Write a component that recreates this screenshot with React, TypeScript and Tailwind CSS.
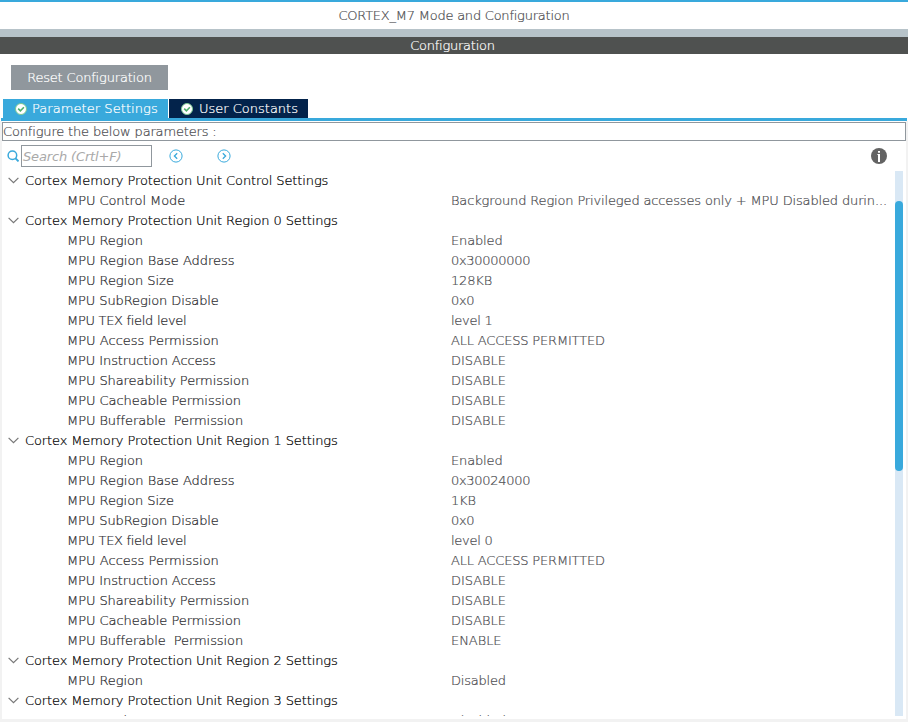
import React from "react";

type Row = { label: string; value?: string; lt?: string; vt?: string };

const region = (n: number, base: string, size: string, tex: string, buf: string): Row[] => [
  { label: `Cortex Memory Protection Unit Region ${n} Settings` },
  { label: "MPU Region", value: "Enabled", lt: "tracking-[-0.08px]", vt: "tracking-[-0.15px]" },
  { label: "MPU Region Base Address", value: base, lt: "tracking-[-0.02px]", vt: "tracking-[-0.3px]" },
  { label: "MPU Region Size", value: size, lt: "tracking-[-0.05px]", vt: "tracking-[-0.15px]" },
  { label: "MPU SubRegion Disable", value: "0x0", lt: "tracking-[-0.1px]", vt: "tracking-[-0.3px]" },
  { label: "MPU TEX field level", value: tex, lt: "tracking-[-0.3px]", vt: "tracking-[-0.25px]" },
  { label: "MPU Access Permission", value: "ALL ACCESS PERMITTED", lt: "tracking-[0.02px]", vt: "tracking-[-0.17px]" },
  { label: "MPU Instruction Access", value: "DISABLE", lt: "tracking-[-0.1px]", vt: "tracking-[-0.05px]" },
  { label: "MPU Shareability Permission", value: "DISABLE", lt: "tracking-[-0.08px]", vt: "tracking-[-0.05px]" },
  { label: "MPU Cacheable Permission", value: "DISABLE", lt: "tracking-[-0.05px]", vt: "tracking-[-0.05px]" },
  { label: "MPU Bufferable  Permission", value: buf, lt: "tracking-[-0.08px]", vt: "tracking-[-0.05px]" },
];

const rows: Row[] = [
  { label: "Cortex Memory Protection Unit Control Settings" },
  {
    label: "MPU Control Mode",
    value: "Background Region Privileged accesses only + MPU Disabled durin...",
    lt: "tracking-[-0.07px]",
    vt: "tracking-[-0.145px]",
  },
  ...region(0, "0x30000000", "128KB", "level 1", "DISABLE"),
  ...region(1, "0x30024000", "1KB", "level 0", "ENABLE"),
  { label: "Cortex Memory Protection Unit Region 2 Settings" },
  { label: "MPU Region", value: "Disabled", lt: "tracking-[-0.08px]", vt: "tracking-[-0.2px]" },
  { label: "Cortex Memory Protection Unit Region 3 Settings" },
  { label: "MPU Region", value: "Disabled", lt: "tracking-[-0.08px]", vt: "tracking-[-0.2px]" },
];

function CheckIcon() {
  return (
    <svg width="12" height="12" viewBox="0 0 12 12" className="shrink-0">
      <circle cx="6" cy="6" r="5.5" fill="#fff" stroke="#7cc891" strokeWidth="1" />
      <path d="M3.2 5.6 5.4 7.9 8.9 4.3" fill="none" stroke="#4fae6a" strokeWidth="1.6" />
    </svg>
  );
}

function Arrow({ d }: { d: string }) {
  return (
    <svg width="14" height="14" viewBox="0 0 14 14" fill="none" stroke="#39a9dc" className="shrink-0">
      <circle cx="7" cy="7" r="6.1" strokeWidth="1" />
      <path d={d} strokeWidth="1.3" />
    </svg>
  );
}

export default function App() {
  return (
    <div className="flex h-[722px] w-[908px] flex-col overflow-hidden bg-white font-['DejaVu_Sans',sans-serif] text-[13px] leading-5 font-extralight whitespace-pre text-[#4c4c50] [-webkit-text-stroke:0.22px]">
      <div className="h-[29px] shrink-0 border-t-2 border-[#39a9dc] pt-1 text-center tracking-[-0.23px]">
        CORTEX_M7 Mode and Configuration
      </div>
      <div className="h-2 shrink-0 bg-[#b7c3c9]" />
      <div className="h-[17px] shrink-0 bg-[#4f5150] pr-[3px] text-center leading-[17px] tracking-[-0.25px] text-white">
        Configuration
      </div>
      <div className="flex h-[45px] shrink-0 pt-[11px] pl-[11px]">
        <button className="h-[25px] w-[157px] bg-[#90979d] text-center leading-[25px] tracking-[-0.18px] text-white">
          Reset Configuration
        </button>
      </div>
      <div className="flex h-[19px] shrink-0 gap-px pl-[3px] leading-[19px] text-white">
        <div className="flex w-[165px] items-center gap-[5px] bg-[#39a9dc] pl-3">
          <CheckIcon />
          <span className="tracking-[0.06px]">Parameter Settings</span>
        </div>
        <div className="flex w-[139px] items-center gap-[6px] bg-[#03234b] pl-3">
          <CheckIcon />
          <span>User Constants</span>
        </div>
      </div>
      <div className="mr-px ml-px h-[3px] shrink-0 bg-[#39a9dc]" />
      <div className="flex min-h-0 flex-1 flex-col border-x-2 border-b-[3px] border-[#f2f2f2] pt-px">
        <div className="h-[19px] shrink-0 border border-[#90979d] leading-[18px] tracking-[-0.16px]">
          Configure the below parameters :
        </div>
        <div className="flex h-[30px] shrink-0 items-center pl-[5px]">
          <svg width="12" height="12" viewBox="0 0 12 12" fill="none" stroke="#39a9dc" className="mr-0.5 shrink-0">
            <circle cx="5.4" cy="5.2" r="4.3" strokeWidth="1.5" />
            <path d="m8.3 8.2 3.2 3.2" strokeWidth="1.9" />
          </svg>
          <div className="h-[22px] w-[131px] border border-[#90979d] pl-px leading-[21px] tracking-[-0.15px] text-[#a9a9a9] italic [-webkit-text-stroke:0px]">
            Search (Crtl+F)
          </div>
          <div className="ml-[17px] flex gap-[34px]">
            <Arrow d="M8.2 4.2 5.4 7l2.8 2.8" />
            <Arrow d="M5.8 4.2 8.6 7 5.8 9.8" />
          </div>
          <svg width="16" height="16" viewBox="0 0 16 16" className="mr-[19px] ml-auto">
            <circle cx="8" cy="8" r="8" fill="#636363" />
            <path d="M7 3h2v1.8H7zM6.4 6H9v8H7V7h-.6z" fill="#fff" />
          </svg>
        </div>
        <div className="mb-[3px] flex min-h-0 flex-1 overflow-hidden">
          <div className="min-w-0 flex-1">
            {rows.map((r, i) =>
              r.value ? (
                <div key={i} className="flex h-5 pl-[65px] text-[#2a2a2e]">
                  <div className={`w-[384px] shrink-0 ${r.lt}`}>{r.label}</div>
                  <div className={`text-[#4c4c50] ${r.vt}`}>{r.value}</div>
                </div>
              ) : (
                <div key={i} className="flex h-5 items-center pl-[6px] tracking-[-0.115px] text-black">
                  <svg width="11" height="7" viewBox="0 0 11 7" className="mr-[6px] mb-px" fill="none" stroke="#777" strokeWidth="1.2">
                    <path d="M.6.8 5.5 5.7 10.4.8" />
                  </svg>
                  <span>{r.label}</span>
                </div>
              ),
            )}
          </div>
          <div className="mr-[3px] w-2 shrink-0 bg-[#d9e8f5] pt-[30px]">
            <div className="h-[270px] rounded-full bg-[#39a9dc]" />
          </div>
        </div>
      </div>
    </div>
  );
}
